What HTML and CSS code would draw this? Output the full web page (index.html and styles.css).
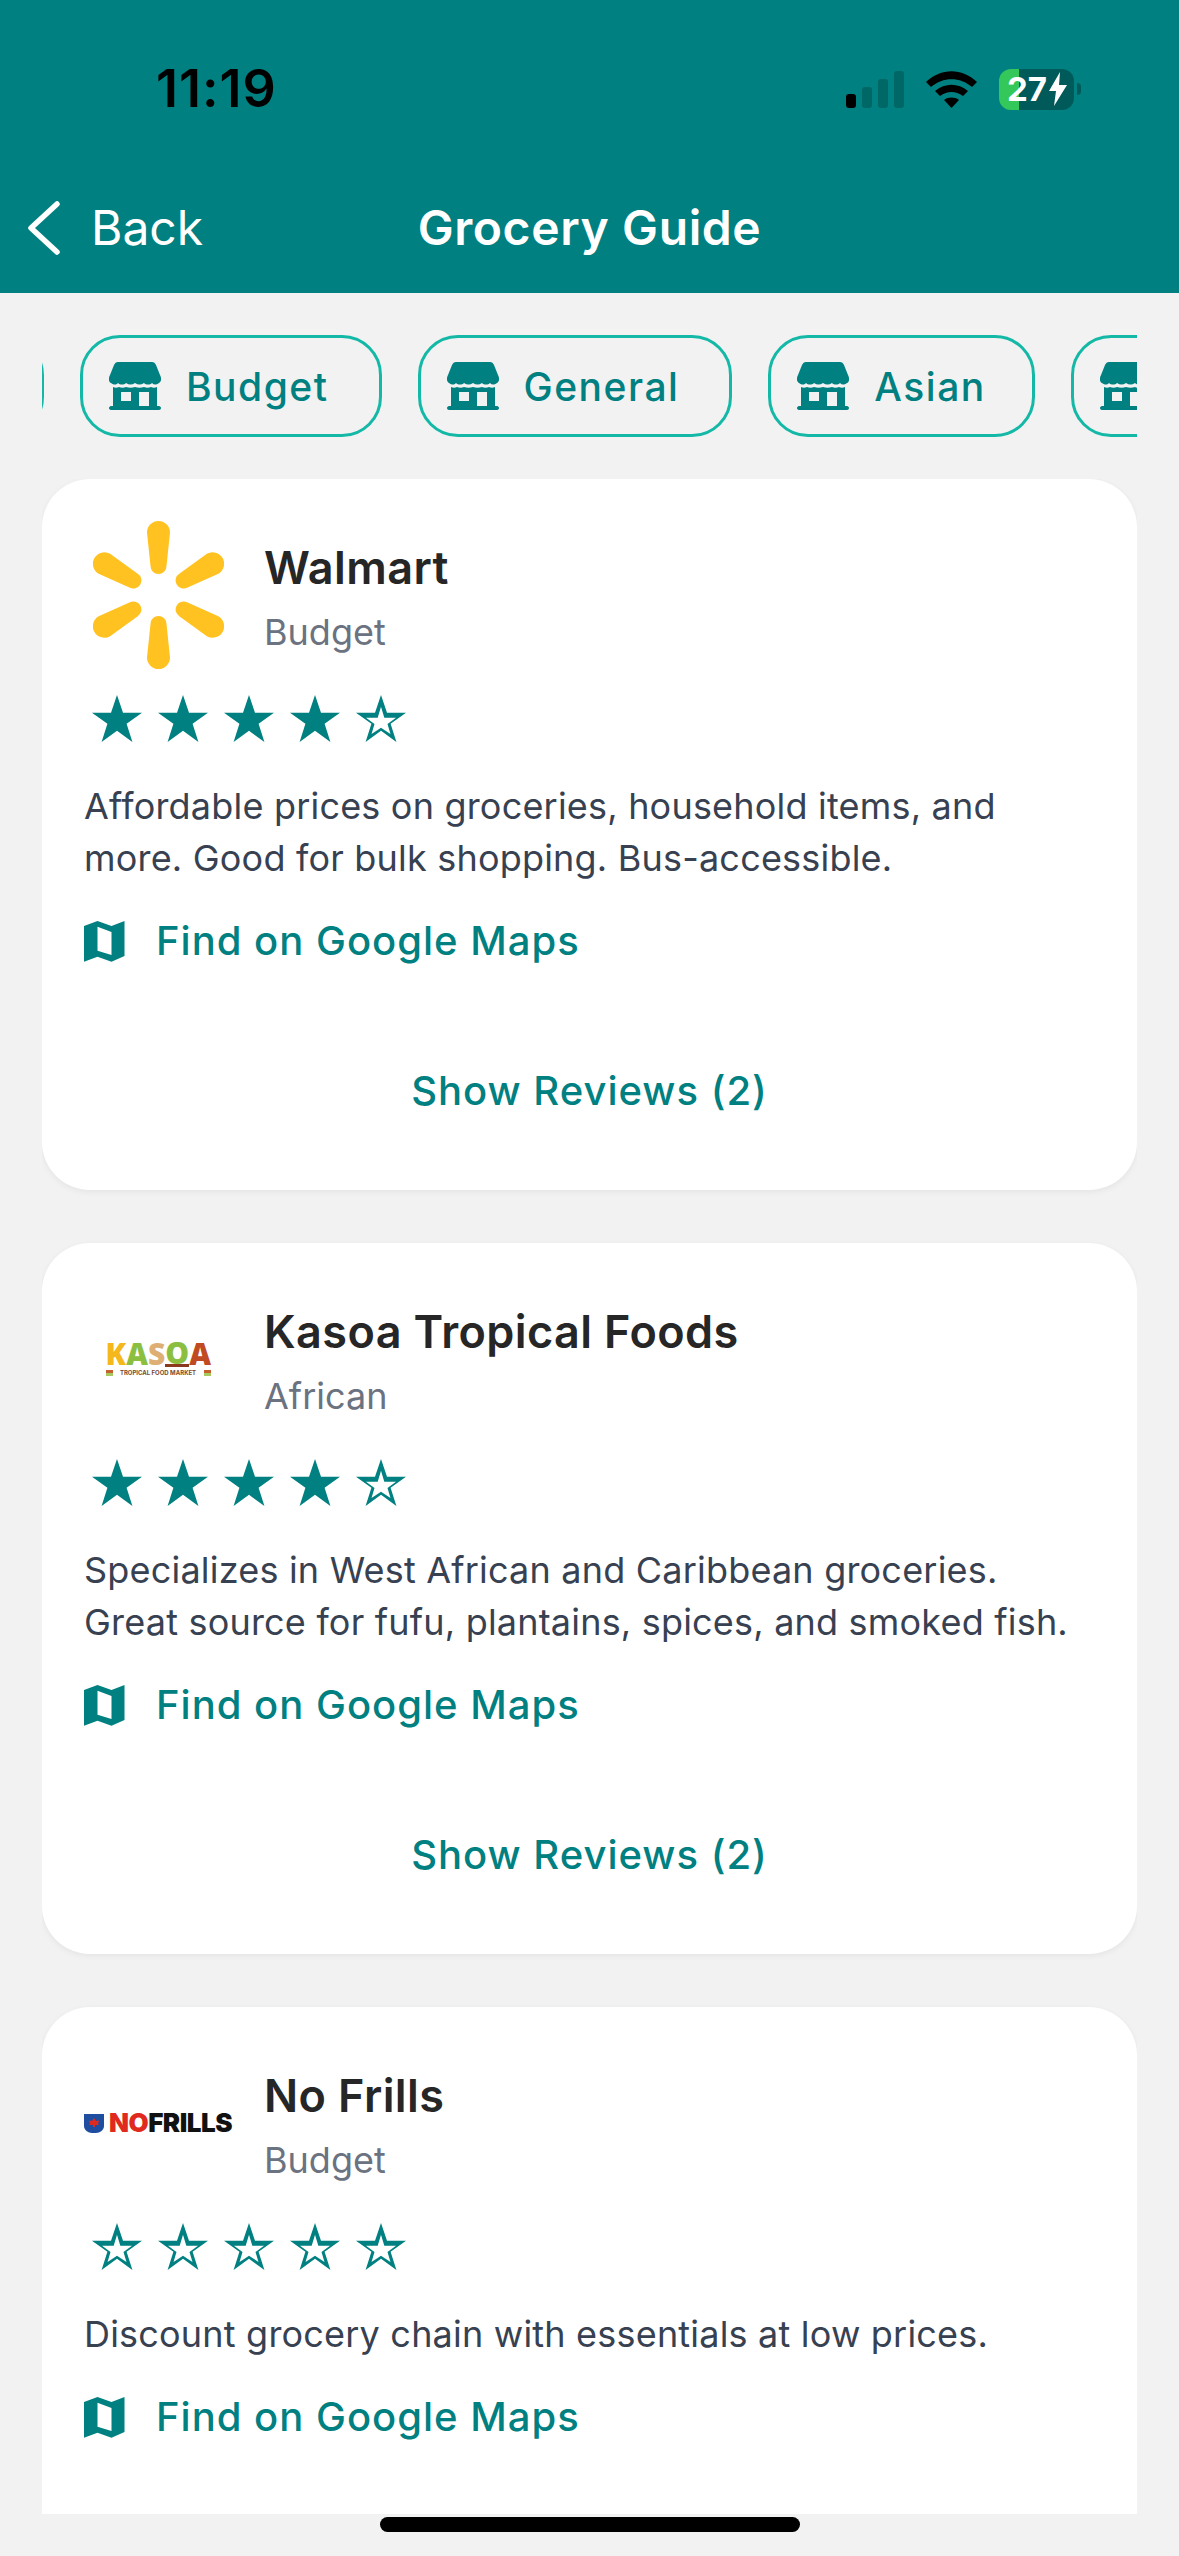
FILE: index.html
```html
<!DOCTYPE html>
<html>
<head>
    <title>Grocery Guide</title>
    <link rel="stylesheet" href="styles.css">
</head>
<body>
    <svg class="icon-defs" width="0" height="0">
        <symbol id="store" viewBox="0 0 52 48">
            <path fill-rule="evenodd" d="M9 0H43C45 0 46 1 47 3L51 13C53 17 52 20 50 21C47 23 45 23 43 21C41 23 37 23 35 21C32 23 29 23 26 21C23 23 20 23 17 21C15 23 11 23 9 21C7 23 5 23 2 21C0 20 -1 17 1 13L5 3C6 1 7 0 9 0Z"/>
            <path fill-rule="evenodd" d="M4 25C6 26 8 26 10 25C12 26 15 26 17 25C20 26 23 26 26 25C29 26 32 26 35 25C37 26 40 26 42 25C44 26 46 26 48 25V44H50C51 44 52 45 52 46C52 47 51 48 50 48H2C1 48 0 47 0 46C0 45 1 44 2 44H4V25ZM12 30V39H22V30H12ZM30 30V44H40V30H30Z"/>
        </symbol>
        <symbol id="star-full" viewBox="0 0 50 47">
            <polygon points="25,0 31,17.8 50,17.8 34.6,28.8 40.4,47 25,35.8 9.6,47 15.4,28.8 0,17.8 19,17.8"/>
        </symbol>
        <symbol id="star-empty" viewBox="0 0 50 47">
            <path fill-rule="evenodd" d="M25 0L31 17.8H50L34.6 28.8L40.4 47L25 35.800L9.600 47L15.400 28.800L0 17.800H19L25 0ZM25 11.700L21.700 22.700H10L18.500 29L15.500 39L25 32.700L34.500 39L31.500 29L40 22.700H28.300L25 11.700Z"/>
        </symbol>
        <symbol id="map" viewBox="0 0 41 41">
            <path fill-rule="evenodd" d="M0 5L13.500 0L27.500 5L40.500 0V35L27.500 40.700L13.500 35.700L0 40.700V5ZM13.500 5.700V29.700L27.500 34V11L13.500 5.700Z"/>
        </symbol>
    </svg>

    <header class="top-bar">
        <div class="status-bar">
            <span class="clock">11:19</span>
            <div class="status-icons">
                <div class="signal">
                    <i class="bar-1"></i><i class="bar-2"></i><i class="bar-3"></i><i class="bar-4"></i>
                </div>
                <svg class="wifi" width="51" height="37" viewBox="0 0 51 37">
                    <path d="M0 11C15 -3.500 36 -3.500 51 11L46 16C34 5.500 17 5.500 5 16Z"/>
                    <path d="M9 20C19 11.500 32 11.500 42 20L37 25C29.500 19.500 21.500 19.500 14 25Z"/>
                    <path d="M18 29C22.500 25.800 28.500 25.800 33 29L25.500 37Z"/>
                </svg>
                <div class="battery">
                    <div class="battery-body">
                        <span class="battery-level">27</span>
                        <svg class="bolt" width="18" height="34" viewBox="0 0 18 34">
                            <path d="M11 0L0 19H7L5 34L18 13H10Z"/>
                        </svg>
                    </div>
                    <span class="battery-nub"></span>
                </div>
            </div>
        </div>
        <nav class="nav-bar">
            <a class="back-link">
                <svg width="34" height="58" viewBox="0 0 34 58">
                    <path d="M31 5L5 29L31 53" fill="none" stroke="#fff" stroke-width="5.500" stroke-linecap="round" stroke-linejoin="round"/>
                </svg>
                <span>Back</span>
            </a>
            <h1>Grocery Guide</h1>
        </nav>
    </header>

    <div class="filter-strip">
        <div class="filter-row">
            <a class="pill pill-all">All</a>
            <a class="pill"><svg class="store-icon"><use href="#store"/></svg>Budget</a>
            <a class="pill"><svg class="store-icon"><use href="#store"/></svg>General</a>
            <a class="pill pill-short"><svg class="store-icon"><use href="#store"/></svg>Asian</a>
            <a class="pill"><svg class="store-icon"><use href="#store"/></svg>African</a>
        </div>
    </div>

    <main class="store-list">
        <section class="card">
            <div class="card-head">
                <div class="logo">
                    <svg width="131" height="148" viewBox="-65.500 -74 131 148" fill="#ffc220">
                        <g id="petals">
                            <path id="petal" d="M-11.500 -62.500A11.500 11.500 0 0 1 11.500 -62.500L8 -29A8 8 0 0 1 -8 -29Z"/>
                            <use href="#petal" transform="rotate(60)"/>
                            <use href="#petal" transform="rotate(120)"/>
                            <use href="#petal" transform="rotate(180)"/>
                            <use href="#petal" transform="rotate(240)"/>
                            <use href="#petal" transform="rotate(300)"/>
                        </g>
                    </svg>
                </div>
                <div class="card-title">
                    <h2>Walmart</h2>
                    <p class="category">Budget</p>
                </div>
            </div>
            <div class="stars">
                <svg><use href="#star-full"/></svg>
                <svg><use href="#star-full"/></svg>
                <svg><use href="#star-full"/></svg>
                <svg><use href="#star-full"/></svg>
                <svg><use href="#star-empty"/></svg>
            </div>
            <p class="desc">Affordable prices on groceries, household items, and more. Good for bulk shopping. Bus-accessible.</p>
            <a class="map-link"><svg><use href="#map"/></svg>Find on Google Maps</a>
            <a class="reviews">Show Reviews (2)</a>
        </section>

        <section class="card">
            <div class="card-head">
                <div class="logo">
                    <div class="kasoa">
                        <div class="kasoa-name"><span class="k1">K</span><span class="k2">A</span><span class="k3">S</span><span class="k4">O</span><span class="k5">A</span></div>
                        <div class="kasoa-tag"><i></i><span>TROPICAL FOOD MARKET</span><i></i></div>
                    </div>
                </div>
                <div class="card-title">
                    <h2>Kasoa Tropical Foods</h2>
                    <p class="category">African</p>
                </div>
            </div>
            <div class="stars">
                <svg><use href="#star-full"/></svg>
                <svg><use href="#star-full"/></svg>
                <svg><use href="#star-full"/></svg>
                <svg><use href="#star-full"/></svg>
                <svg><use href="#star-empty"/></svg>
            </div>
            <p class="desc">Specializes in West African and Caribbean groceries. Great source for fufu, plantains, spices, and smoked fish.</p>
            <a class="map-link"><svg><use href="#map"/></svg>Find on Google Maps</a>
            <a class="reviews">Show Reviews (2)</a>
        </section>

        <section class="card">
            <div class="card-head">
                <div class="logo">
                    <div class="nofrills">
                        <svg width="20" height="19" viewBox="0 0 20 19">
                            <path d="M0 0H20V12C20 16 16 19 12 19H8C4 19 0 16 0 12Z" fill="#1f4ea1"/>
                            <path d="M10 4L12 7L15 6.500L14 10L15 11H11V13H9V11H5L6 10L5 6.500L8 7Z" fill="#e02a20"/>
                        </svg>
                        <span class="no">NO</span><span class="frills">FRILLS</span>
                    </div>
                </div>
                <div class="card-title">
                    <h2>No Frills</h2>
                    <p class="category">Budget</p>
                </div>
            </div>
            <div class="stars">
                <svg><use href="#star-empty"/></svg>
                <svg><use href="#star-empty"/></svg>
                <svg><use href="#star-empty"/></svg>
                <svg><use href="#star-empty"/></svg>
                <svg><use href="#star-empty"/></svg>
            </div>
            <p class="desc">Discount grocery chain with essentials at low prices.</p>
            <a class="map-link"><svg><use href="#map"/></svg>Find on Google Maps</a>
        </section>
    </main>

    <div class="home-area">
        <span class="home-indicator"></span>
    </div>
</body>
</html>
```

FILE: styles.css
```css
* {
    box-sizing: border-box;
}
html, body {
    margin: 0;
    height: 2556px;
    overflow: hidden;
}
body {
    display: flex;
    flex-direction: column;
    background-color: #f2f2f2;
    font-family: Inter, "Noto Sans", sans-serif;
}
h1, h2, p {
    margin: 0;
}
.icon-defs {
    position: absolute;
}

/* header */
.top-bar {
    flex: none;
    height: 293px;
    background-color: #008080;
}
.status-bar {
    display: flex;
    align-items: center;
    justify-content: space-between;
    height: 132px;
    padding: 44px 98px 0 156px;
}
.clock {
    font-size: 52px;
    font-weight: 600;
    letter-spacing: 1px;
    color: #000;
}
.status-icons {
    display: flex;
    align-items: flex-end;
    gap: 22px;
}
.signal {
    display: flex;
    align-items: flex-end;
    gap: 6px;
}
.signal i {
    display: block;
    width: 10px;
    border-radius: 3px;
    background-color: #006767;
}
.signal .bar-1 { height: 14px; background-color: #000; }
.signal .bar-2 { height: 21px; }
.signal .bar-3 { height: 29px; }
.signal .bar-4 { height: 37px; }
.wifi {
    display: block;
}
.battery {
    display: flex;
    align-items: center;
    gap: 3px;
    margin-bottom: -2px;
}
.battery-body {
    display: flex;
    align-items: center;
    gap: 2px;
    width: 75px;
    height: 41px;
    padding-left: 8px;
    border-radius: 12px;
    background: linear-gradient(to right, #34c759 20px, #005a5a 20px);
}
.battery-level {
    font-size: 33px;
    font-weight: 700;
    color: #fff;
}
.bolt {
    fill: #fff;
}
.battery-nub {
    width: 4px;
    height: 12px;
    border-radius: 0 4px 4px 0;
    background-color: #005a5a;
}
.nav-bar {
    position: relative;
    display: flex;
    align-items: center;
    height: 95px;
    margin-top: 48px;
    padding-left: 26px;
}
.back-link {
    display: flex;
    align-items: center;
    gap: 31px;
    font-size: 48px;
    color: #fff;
}
.nav-bar h1 {
    position: absolute;
    left: 0;
    right: 0;
    text-align: center;
    font-size: 48px;
    font-weight: 600;
    letter-spacing: 0.6px;
    color: #fff;
}

/* filters */
.filter-strip {
    flex: none;
    margin: 42px;
    overflow: hidden;
}
.filter-row {
    display: flex;
    gap: 36px;
    margin-left: -201px;
}
.pill {
    flex: none;
    display: flex;
    align-items: center;
    gap: 25px;
    height: 102px;
    padding: 0 50px 0 26px;
    border: 3px solid #14b8a6;
    border-radius: 40px;
    font-size: 39px;
    font-weight: 500;
    letter-spacing: 1.5px;
    color: #008080;
}
.pill-short {
    padding-right: 46px;
}
.pill-all {
    width: 203px;
    justify-content: center;
}
.store-icon {
    width: 52px;
    height: 48px;
    fill: #008080;
}

/* cards */
.store-list {
    flex: 1;
    min-height: 0;
    display: flex;
    flex-direction: column;
    gap: 53px;
    margin: 0 42px;
    overflow: hidden;
}
.card {
    flex: none;
    height: 711px;
    padding: 42px;
    border-radius: 48px;
    background-color: #fff;
    box-shadow: 0 2px 6px rgba(0, 0, 0, 0.06);
}
.card-head {
    display: flex;
    gap: 32px;
}
.logo {
    flex: none;
    display: flex;
    align-items: center;
    justify-content: center;
    width: 148px;
    height: 148px;
}
.card-title {
    padding-top: 20px;
}
.card-title h2 {
    font-size: 45px;
    font-weight: 600;
    line-height: 54px;
    letter-spacing: 0.4px;
    color: #262626;
}
.category {
    margin-top: 15px;
    font-size: 36px;
    line-height: 44px;
    color: #6b7280;
}
.stars {
    display: flex;
    gap: 16px;
    margin: 26px 0 0 8px;
}
.stars svg {
    width: 50px;
    height: 47px;
    fill: #008080;
}
.desc {
    margin-top: 38px;
    font-size: 36px;
    line-height: 52px;
    letter-spacing: 0.2px;
    color: #374151;
}
.map-link {
    display: flex;
    align-items: center;
    gap: 31px;
    margin-top: 33px;
    font-size: 40px;
    font-weight: 500;
    line-height: 48px;
    letter-spacing: 1px;
    color: #008080;
}
.map-link svg {
    width: 41px;
    height: 41px;
    fill: #008080;
}
.reviews {
    display: block;
    margin-top: 102px;
    text-align: center;
    font-size: 40px;
    font-weight: 500;
    line-height: 48px;
    letter-spacing: 1px;
    color: #008080;
}

/* logos */
.kasoa {
    width: 105px;
}
.kasoa-name {
    display: flex;
    justify-content: space-between;
    font-family: "Open Sans", sans-serif;
    font-size: 30px;
    font-weight: 800;
    line-height: 26px;
}
.k1 { color: #f4b81c; }
.k2 { color: #8cbf3f; }
.k3 { color: #deaf74; }
.k4 { color: #8cbf3f; border-bottom: 3px solid #8a3b1d; line-height: 23px; }
.k5 { color: #c04a22; }
.kasoa-tag {
    display: flex;
    align-items: center;
    justify-content: space-between;
    margin-top: 2px;
    font-size: 6px;
    font-weight: 700;
    line-height: 8px;
    color: #7a4a2a;
}
.kasoa-tag i {
    display: block;
    width: 7px;
    height: 6px;
    background: linear-gradient(#c5602f 50%, #a8c860 50%);
}
.nofrills {
    display: flex;
    align-items: center;
    width: 148px;
    font-size: 26px;
    font-weight: 900;
    line-height: 20px;
    letter-spacing: -0.5px;
}
.nofrills svg {
    flex: none;
    margin-right: 5px;
}
.no {
    color: #e02a20;
}
.frills {
    color: #111;
}

/* bottom */
.home-area {
    flex: none;
    display: flex;
    justify-content: center;
    height: 42px;
    padding-top: 3px;
}
.home-indicator {
    width: 420px;
    height: 15px;
    border-radius: 8px;
    background-color: #000;
}
```
